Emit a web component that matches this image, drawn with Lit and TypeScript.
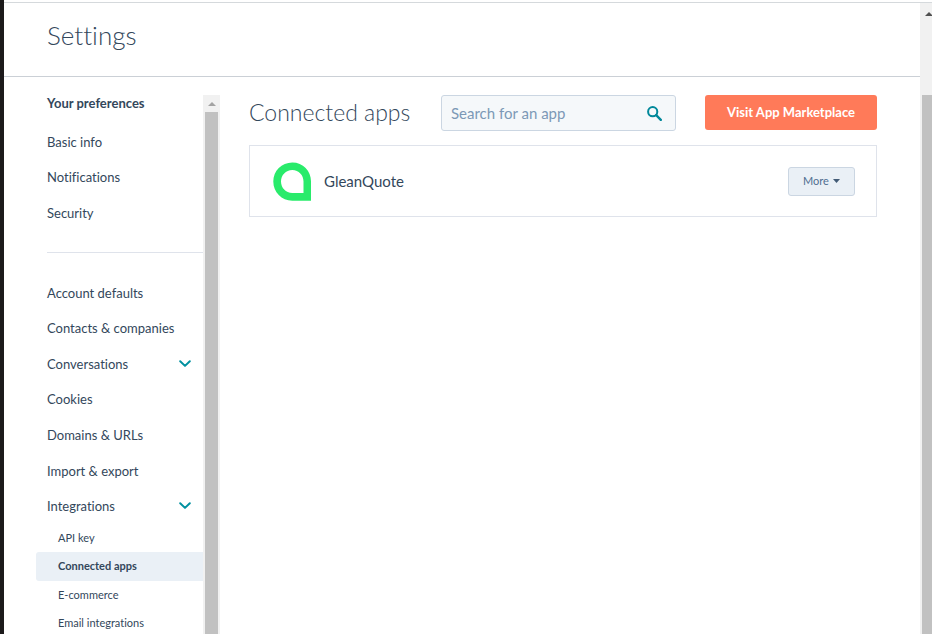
import { LitElement, html, css, svg, nothing } from "lit";
import { customElement, property, state } from "lit/decorators.js";
import { classMap } from "lit/directives/class-map.js";

interface NavItem {
  label: string;
  expandable?: boolean;
}

const PREFERENCES: NavItem[] = [
  { label: "Basic info" },
  { label: "Notifications" },
  { label: "Security" },
];

const ACCOUNT: NavItem[] = [
  { label: "Account defaults" },
  { label: "Contacts & companies" },
  { label: "Conversations", expandable: true },
  { label: "Cookies" },
  { label: "Domains & URLs" },
  { label: "Import & export" },
  { label: "Integrations", expandable: true },
];

const INTEGRATIONS = ["API key", "Connected apps", "E-commerce", "Email integrations"];

const chevron = svg`<svg class="chevron" width="12" height="8" viewBox="0 0 12 8" aria-hidden="true">
  <path d="M1.2 1.3 6 5.9l4.8-4.6" fill="none" stroke="#0091a0" stroke-width="2" stroke-linecap="round" stroke-linejoin="round"/>
</svg>`;

@customElement("settings-nav")
export class SettingsNav extends LitElement {
  @property() current = "Connected apps";

  static styles = css`
    :host {
      display: flex;
      flex: none;
      width: 184px;
      overflow: hidden;
    }
    nav {
      flex: 1;
      min-width: 0;
    }
    h2 {
      margin: 0 0 13px 11px;
      font-size: 13px;
      line-height: 16px;
      font-weight: 700;
    }
    ul {
      display: grid;
      grid-auto-rows: 1fr;
      margin: 0;
      padding: 0;
      list-style: none;
    }
    .preferences {
      min-height: 107px;
    }
    .account {
      min-height: 249px;
    }
    .sub {
      min-height: 113px;
    }
    hr {
      margin: 21px 0 22px 11px;
      border: 0;
      border-top: 1px solid #dfe3eb;
    }
    a {
      display: flex;
      align-items: center;
      justify-content: space-between;
      height: 100%;
      box-sizing: border-box;
      padding: 0 12px 0 11px;
      border-radius: 3px 0 0 3px;
      color: inherit;
      font-size: 13px;
      line-height: 16px;
      text-decoration: none;
      white-space: nowrap;
    }
    .sub a {
      padding-left: 22px;
      font-size: 11px;
    }
    a.current {
      background: #eaf0f6;
      font-weight: 700;
    }
    .track {
      flex: none;
      width: 13px;
      padding: 0 2px;
      background: #f1f1f1;
      display: flex;
      flex-direction: column;
    }
    .arrow {
      flex: none;
      height: 17px;
      display: grid;
      place-items: center;
    }
    .thumb {
      flex: 1;
      background: #c1c1c1;
    }
  `;

  private row(item: NavItem) {
    return html`<li><a href="#">${item.label}${item.expandable ? chevron : nothing}</a></li>`;
  }

  render() {
    return html`
      <nav aria-label="Settings">
        <h2>Your preferences</h2>
        <ul class="preferences">${PREFERENCES.map((i) => this.row(i))}</ul>
        <hr />
        <ul class="account">${ACCOUNT.map((i) => this.row(i))}</ul>
        <ul class="sub">
          ${INTEGRATIONS.map(
            (label) => html`<li>
              <a href="#" class=${classMap({ current: label === this.current })}>${label}</a>
            </li>`,
          )}
        </ul>
      </nav>
      <div class="track" aria-hidden="true">
        <div class="arrow">
          <svg width="8" height="4" viewBox="0 0 8 4"><path d="M0 4 4 0l4 4z" fill="#a3a3a3" /></svg>
        </div>
        <div class="thumb"></div>
      </div>
    `;
  }
}

@customElement("connected-apps")
export class ConnectedApps extends LitElement {
  @state() private query = "";

  static styles = css`
    :host {
      display: block;
      flex: 1;
      min-width: 0;
      padding: 0 43px 0 29px;
    }
    .bar {
      display: flex;
      align-items: flex-start;
      min-height: 36px;
      margin-bottom: 14px;
    }
    h2 {
      margin: 0;
      flex: none;
      width: 192px;
      font-size: 23px;
      line-height: 34px;
      font-weight: 300;
      white-space: nowrap;
    }
    .search {
      flex: 1;
      min-width: 0;
      display: flex;
      align-items: center;
      box-sizing: border-box;
      height: 36px;
      padding: 0 13px 0 9px;
      border: 1px solid #cbd6e2;
      border-radius: 3px;
      background: #f5f8fa;
    }
    input {
      flex: 1;
      min-width: 0;
      padding: 0;
      border: 0;
      outline: 0;
      background: none;
      color: #33475b;
      font: 400 15px/20px Lato, "Liberation Sans", sans-serif;
    }
    input::placeholder {
      color: #7c98b6;
      opacity: 1;
    }
    button {
      font-family: inherit;
      cursor: pointer;
      box-sizing: border-box;
      border-radius: 3px;
      white-space: nowrap;
    }
    .primary {
      flex: none;
      width: 172px;
      height: 35px;
      margin-left: 29px;
      padding: 0 0 2px;
      border: 0;
      background: #ff7a59;
      color: #fff;
      font-size: 13px;
      line-height: 16px;
      font-weight: 700;
    }
    .card {
      display: flex;
      align-items: center;
      box-sizing: border-box;
      min-height: 72px;
      padding: 0 21px 0 23px;
      border: 1px solid #dfe3eb;
    }
    .name {
      flex: 1;
      margin-left: 12px;
      font-size: 15px;
      line-height: 20px;
    }
    .more {
      display: flex;
      align-items: center;
      justify-content: center;
      gap: 4px;
      width: 67px;
      height: 29px;
      padding: 0;
      border: 1px solid #cbd6e2;
      background: #eaf0f6;
      color: #506e91;
      font-size: 11px;
      line-height: 16px;
    }
  `;

  render() {
    return html`
      <div class="bar">
        <h2>Connected apps</h2>
        <div class="search">
          <input
            type="text"
            aria-label="Search for an app"
            placeholder="Search for an app"
            .value=${this.query}
            @input=${(e: Event) => (this.query = (e.target as HTMLInputElement).value)}
          />
          <svg width="15" height="15" viewBox="0 0 15 15" aria-hidden="true">
            <circle cx="5.7" cy="5.7" r="4.6" fill="none" stroke="#00889a" stroke-width="2" />
            <path d="m9.2 9.2 4.6 4.6" stroke="#00889a" stroke-width="2.4" stroke-linecap="round" />
          </svg>
        </div>
        <button class="primary" type="button">Visit App Marketplace</button>
      </div>
      <div class="card">
        <svg width="39" height="39" viewBox="0 0 39 39" aria-hidden="true">
          <path
            fill="#29eb6b"
            fill-rule="evenodd"
            d="M19.3.4C30 .4 38 8.600 38 19.200V38.700H19.300C8.600 38.700.3 30.200.3 19.500S8.600.4 19.300.4ZM19.300 8C12.800 8 8 13.200 8 19.500s4.800 11.500 11.300 11.500H30.500V19.500C30.500 13.200 25.800 8 19.300 8Z"
          />
        </svg>
        <span class="name">GleanQuote</span>
        <button class="more" type="button">
          More
          <svg width="7" height="4" viewBox="0 0 7 4" aria-hidden="true">
            <path d="M0 0h7L3.500 4z" fill="#425b76" />
          </svg>
        </button>
      </div>
    `;
  }
}

@customElement("app-root")
export class AppRoot extends LitElement {
  static styles = css`
    :host {
      display: flex;
      flex-direction: column;
      box-sizing: border-box;
      height: 100vh;
      overflow: hidden;
      padding-top: 2px;
      border-left: 4px solid #1c1a1b;
      background: #fff;
      color: #33475b;
      font-family: Lato, "Liberation Sans", sans-serif;
      font-variant-ligatures: none;
    }
    .frame {
      flex: 1;
      min-height: 0;
      display: flex;
      border-top: 1px solid #d5d9dc;
    }
    .page {
      flex: 1;
      min-width: 0;
      display: flex;
      flex-direction: column;
    }
    header {
      flex: none;
      padding: 14px 43px 23px;
      border-bottom: 1px solid #cbd0d6;
    }
    h1 {
      margin: 0;
      font-size: 26px;
      line-height: 36px;
      font-weight: 300;
    }
    .body {
      flex: 1;
      min-height: 0;
      display: flex;
      padding: 18px 0 0 32px;
    }
    .track {
      flex: none;
      width: 10px;
      padding-left: 2px;
      background: #f1f1f1;
      overflow: hidden;
      display: flex;
      flex-direction: column;
    }
    .arrow {
      flex: none;
      height: 92px;
      box-sizing: border-box;
      padding: 7px 0 0 3px;
      line-height: 0;
    }
    .thumb {
      flex: 1;
      background: #c1c1c1;
    }
  `;

  render() {
    return html`
      <div class="frame">
        <div class="page">
          <header><h1>Settings</h1></header>
          <div class="body">
            <settings-nav></settings-nav>
            <connected-apps></connected-apps>
          </div>
        </div>
        <div class="track" aria-hidden="true">
          <div class="arrow">
            <svg width="8" height="4" viewBox="0 0 8 4"><path d="M0 4 4 0l4 4z" fill="#505050" /></svg>
          </div>
          <div class="thumb"></div>
        </div>
      </div>
    `;
  }
}
